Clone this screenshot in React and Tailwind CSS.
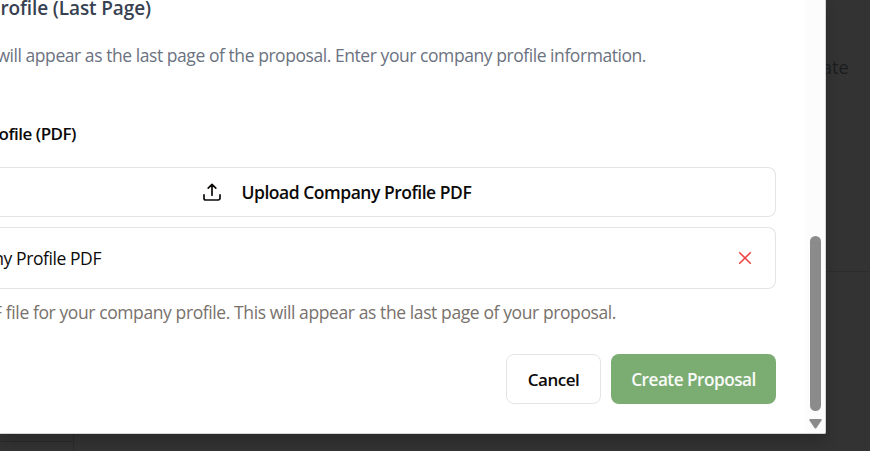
import React from "react";

const text = "whitespace-nowrap leading-6";

export default function App() {
  return (
    <div
      className="relative h-[451px] w-[870px] overflow-hidden bg-[#333333]"
      style={{ fontFamily: '"Segoe UI", "Open Sans", "Noto Sans", sans-serif' }}
    >
      {/* dimmed page behind the dialog */}
      <div className="absolute left-[826px] top-[271px] h-px w-[44px] bg-[#2d2d2d]" />
      <div className="absolute left-0 top-[441px] h-px w-[73px] bg-[#2b2b2b]" />
      <div className="absolute left-[73px] top-[434px] h-[17px] w-px bg-[#2b2b2b]" />
      <div className="absolute left-[822px] top-[55px] text-[18px] leading-6 text-[#1b1d20]">ate</div>

      {/* dialog */}
      <div className="relative flex h-[434px] w-[826px] rounded-br-[2px] border-b border-r border-[#d2d4d5] bg-white shadow-[0_8px_14px_rgba(0,0,0,0.18)]">
        <div className="flex w-[806px] flex-col pr-[30px]">
          <div className="flex h-[43px] w-[151px] justify-end">
            <h3 className={text + " mt-[-4px] text-[19px] font-semibold tracking-[-0.1px] text-[#374151]"}>rofile (Last Page)</h3>
          </div>
          <div className="flex h-[79px] w-[646px] justify-end">
            <p className={text + " text-[17.5px] tracking-[-0.44px] text-[#6b7280]"}>will appear as the last page of the proposal. Enter your company profile information.</p>
          </div>
          <div className="flex h-[45px] w-[76px] justify-end">
            <label className={text + " text-[17px] font-semibold tracking-[-0.5px] text-[#0c0a09]"}>ofile (PDF)</label>
          </div>
          <button className="flex h-[50px] items-center rounded-r-[8px] border-y border-r border-[#e4e4e6] bg-white pl-[202px] text-[#0c0a09]">
            <svg className="h-5 w-5" viewBox="0 0 20 20" fill="none" stroke="currentColor" strokeWidth="1.7" strokeLinecap="round" strokeLinejoin="round">
              <path d="M10 13.2V2.5M6.2 6.2 10 2.4l3.8 3.8M2 12.8v3.4a1.8 1.8 0 0 0 1.8 1.8h12.4a1.8 1.8 0 0 0 1.8-1.8v-3.4" />
            </svg>
            <span className={text + " ml-[19.5px] text-[17.5px] font-semibold tracking-[-0.48px]"}>Upload Company Profile PDF</span>
          </button>
          <div className="mt-[10px] flex h-[62px] items-center justify-between rounded-r-[8px] border-y border-r border-[#e4e4e6] pr-[20px]">
            <div className="flex w-[101px] justify-end">
              <span className={text + " text-[17.5px] tracking-[-0.42px] text-[#0c0a09]"}>ny Profile PDF</span>
            </div>
            <svg className="h-5 w-5" viewBox="0 0 20 20" fill="none" stroke="#ef4444" strokeWidth="1.6" strokeLinecap="round">
              <path d="m4.7 4.7 10.6 10.6M15.3 4.7 4.7 15.3" />
            </svg>
          </div>
          <div className="mt-[11px] flex w-[616px] justify-end">
            <p className={text + " text-[17.5px] tracking-[-0.4px] text-[#78716c]"}>F file for your company profile. This will appear as the last page of your proposal.</p>
          </div>
          <div className="mt-[30px] flex justify-end gap-[10px]">
            <button className={text + " h-[50px] w-[95px] rounded-[8px] border border-[#e4e4e6] bg-white pt-px text-[17px] font-semibold tracking-[-0.5px] text-[#0c0a09]"}>Cancel</button>
            <button className={text + " h-[50px] w-[165px] rounded-[8px] bg-[#7bad73] pt-px text-[17.2px] font-semibold tracking-[-0.5px] text-[#fafaf9]"}>Create Proposal</button>
          </div>
        </div>
        {/* scrollbar */}
        <div className="flex w-[19px] flex-col items-center bg-[#fcfcfc] pt-[236px]">
          <div className="h-[175px] w-[11px] rounded-full bg-[#8b8b8b]" />
          <svg className="mt-[8px] h-[10px] w-[13px]" viewBox="0 0 13 10">
            <path d="M1.3 0h10.4c1 0 1.3.8.8 1.5L7.4 9c-.5.7-1.3.7-1.8 0L.5 1.5C0 .8.3 0 1.3 0Z" fill="#8b8b8b" />
          </svg>
        </div>
      </div>
    </div>
  );
}
